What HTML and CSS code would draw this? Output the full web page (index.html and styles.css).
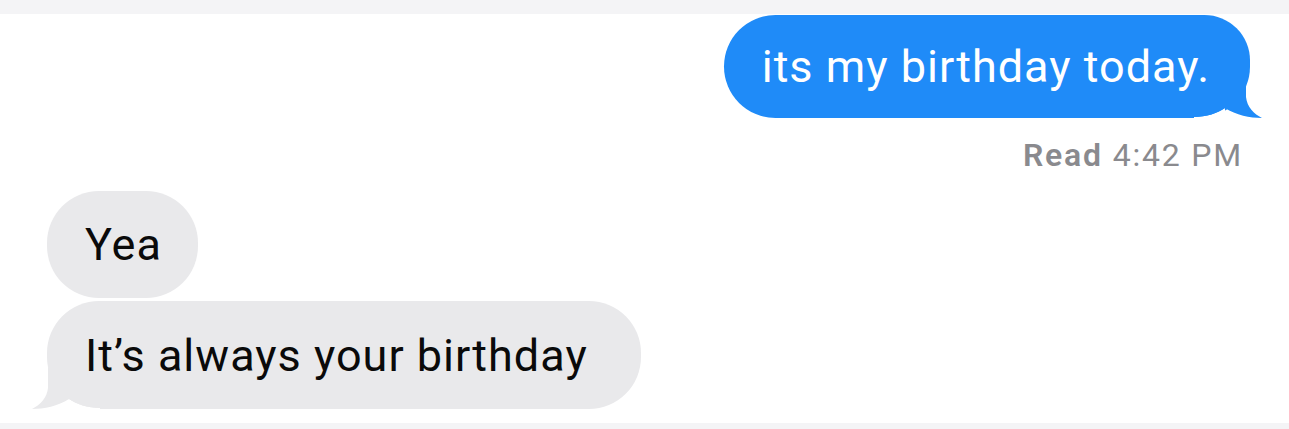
FILE: index.html
```html
<!DOCTYPE html>
<html lang="en">
<head>
    <meta charset="UTF-8">
    <title>Messages</title>
    <link rel="stylesheet" href="styles.css">
</head>
<body>
<div class="top-bar"></div>
<main class="thread">
    <!-- Sent -->
    <div class="bubble sent">
        <span class="text">its my birthday today.</span>
        <svg class="tail tail-right" viewBox="0 0 70 42" width="70" height="42">
            <path fill="#fff" d="M0 40 C12 40 24 36 31 31 L31 42 L0 42 Z"/>
            <path fill="#1f8bf8" d="M0 40 C12 40 24 36 31 31 C42 38 56 41 68 41 C60 37 53 30 52 20 L52 0 L0 0 Z"/>
        </svg>
    </div>
    <div class="receipt"><b>Read</b> 4:42 PM</div>

    <!-- Received -->
    <div class="bubble received short"><span class="text">Yea</span></div>
    <div class="bubble received last">
        <span class="text">It’s always your birthday</span>
        <svg class="tail tail-left" viewBox="0 0 70 42" width="70" height="42">
            <path fill="#fff" d="M0 40 C12 40 24 36 31 31 L31 42 L0 42 Z"/>
            <path fill="#e9e9eb" d="M0 40 C12 40 24 36 31 31 C42 38 56 41 68 41 C60 37 53 30 52 20 L52 0 L0 0 Z"/>
        </svg>
    </div>
</main>
<div class="bottom-bar"></div>
</body>
</html>
```

FILE: styles.css
```css
body {
    margin: 0;
    font-family: Roboto, "Liberation Sans", sans-serif;
    background: white;
    height: 429px;
    overflow: hidden;
}

.top-bar {
    height: 14px;
    background: #f4f4f6;
}

.bottom-bar {
    height: 6px;
    background: #f4f4f6;
}

.thread {
    display: flex;
    flex-direction: column;
    align-items: flex-start;
    height: 409px;
}

.bubble {
    position: relative;
    display: flex;
    align-items: center;
    box-sizing: border-box;
    padding: 0 40px 0 38px;
    border-radius: 52px;
    font-size: 45px;
    letter-spacing: 1px;
    white-space: nowrap;
}

.bubble .text {
    position: relative;
    z-index: 1;
}

.sent {
    align-self: flex-end;
    margin: 1px 39px 0 0;
    height: 103px;
    background: #1f8bf8;
    color: white;
    border-top-right-radius: 46px;
}

.received {
    margin-left: 47px;
    height: 107px;
    background: #e9e9eb;
    color: #0a0a0a;
}

.received.short {
    padding-right: 36px;
}

.received.last {
    margin-top: 3px;
    height: 108px;
    padding-right: 53px;
}

.receipt {
    align-self: flex-end;
    margin: 18px 46px 0 0;
    height: 55px;
    font-size: 32px;
    letter-spacing: 1.8px;
    color: #8a8a8e;
}

.receipt b {
    font-weight: 600;
}

.tail {
    position: absolute;
    bottom: -1px;
}

.tail-right {
    right: -14px;
}

.tail-left {
    left: -17px;
    transform: scaleX(-1);
}
```
